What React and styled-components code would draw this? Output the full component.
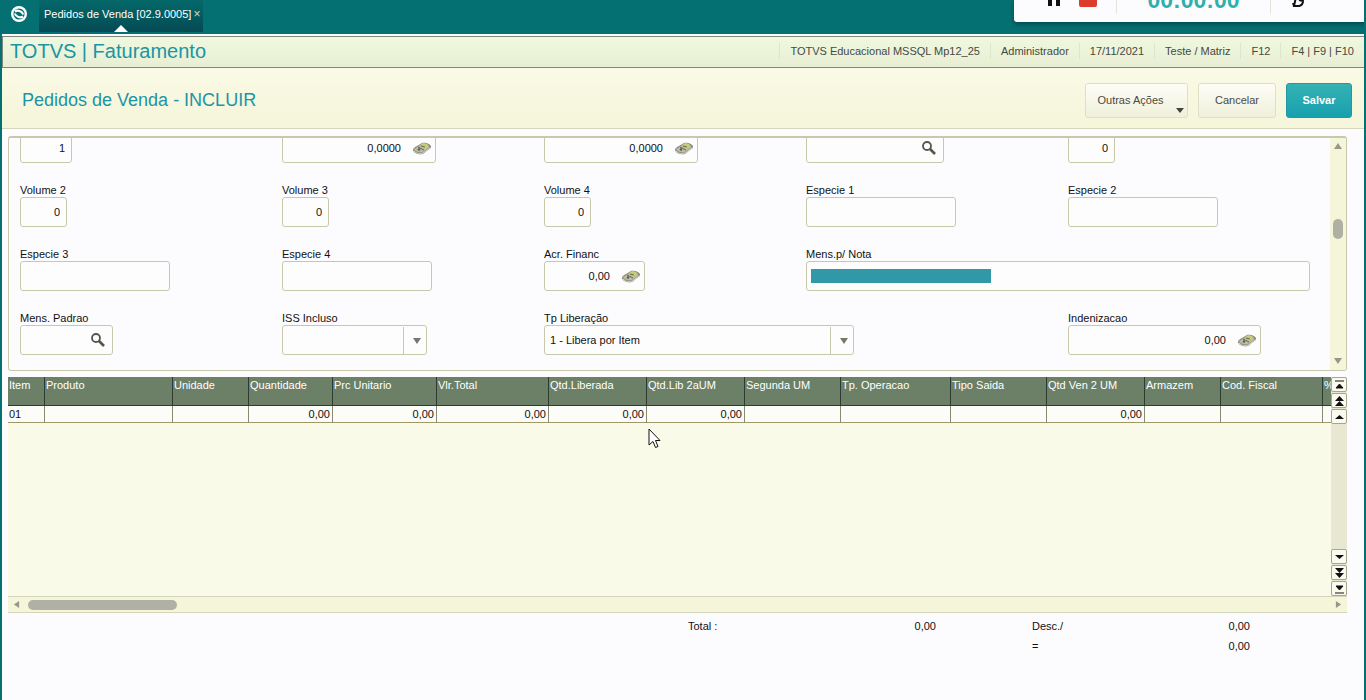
import React from "react";
import styled, { createGlobalStyle } from "styled-components";

const Global = createGlobalStyle`
  * { box-sizing: border-box; }
  body { margin: 0; background: #fcfcfe; font-family: "Liberation Sans", Arial, sans-serif; font-size: 11px; color: #111; }
  button, input, select { font: inherit; color: inherit; }
`;

const Window = styled.div`
  position: relative;
  display: flex;
  flex-direction: column;
  min-height: 100vh;
  overflow: hidden;
  border: 2px solid #057072;
  border-width: 0 2px;
`;

const TopBar = styled.header`
  display: flex;
  height: 34px;
  background: #057072;
`;

const LogoButton = styled.button`
  display: flex;
  align-items: center;
  justify-content: center;
  width: 34px;
  height: 28px;
  padding: 0;
  border: 0;
  background: none;
`;

const Tab = styled.div`
  position: relative;
  display: flex;
  align-items: center;
  gap: 2px;
  height: 32px;
  margin-left: 3px;
  padding: 0 3px 4px 5px;
  background: linear-gradient(#04696a, #044a54);
  color: #fff;
  white-space: nowrap;
`;

const TabClose = styled.button`
  padding: 0;
  border: 0;
  background: none;
  color: #c4dcdc;
  font-size: 12px;
  line-height: 12px;
`;

const TabMarker = styled.span`
  position: absolute;
  left: 75px;
  bottom: 0;
  border: 7px solid transparent;
  border-top-width: 0;
  border-bottom-color: #fff;
`;

const Recorder = styled.aside`
  position: absolute;
  top: 0;
  right: -2px;
  display: flex;
  align-items: flex-end;
  width: 352px;
  height: 22px;
  padding-left: 34px;
  overflow: hidden;
  border-bottom-left-radius: 3px;
  background: #fcfcfe;
  box-shadow: 0 2px 5px rgba(0, 30, 40, 0.5);
`;

const Bars = styled.span`
  width: 12px;
  height: 6px;
  margin-bottom: 16px;
  border: solid #111;
  border-width: 0 4px;
`;

const Stop = styled.span`
  width: 18px;
  height: 7px;
  margin: 0 19px 15px;
  border-radius: 0 0 2px 2px;
  background: #dc3c2c;
`;

const Rule = styled.span`
  width: 1px;
  height: 14px;
  margin-bottom: 8px;
  background: #e4e4dc;
`;

const Timer = styled.span`
  width: 153px;
  margin-bottom: 10px;
  color: #2fb0ac;
  font-size: 23px;
  font-weight: bold;
  line-height: 23px;
  text-align: center;
`;

const TitleBar = styled.div`
  display: flex;
  align-items: center;
  justify-content: space-between;
  height: 32px;
  margin-top: 2px;
  padding: 0 0 2px 7px;
  border: 1px solid #83867c;
  border-right: 0;
  background: linear-gradient(#eff9df, #e8eed4);
`;

const AppName = styled.div`
  color: #1a95a4;
  font-size: 20px;
  line-height: 24px;
`;

const SessionInfo = styled.ul`
  display: flex;
  margin: 0;
  padding: 0;
  list-style: none;
  color: #48483e;
`;

const SessionItem = styled.li`
  padding: 2px 10px;
  border-left: 1px solid #dfe4cc;
`;

const Heading = styled.section`
  display: flex;
  align-items: center;
  gap: 10px;
  height: 61px;
  padding: 4px 12px 0 20px;
  border-bottom: 1px solid #d6d6c0;
  background: linear-gradient(#fafae6, #f5f5da);
`;

const PageTitle = styled.h1`
  flex: 1;
  margin: 0;
  color: #1a95a4;
  font-size: 18px;
  font-weight: normal;
`;

const Button = styled.button`
  position: relative;
  width: ${(p) => p.$width}px;
  height: 35px;
  padding: 0 ${(p) => (p.$menu ? 12 : 0)}px 0 0;
  border: 1px solid ${(p) => (p.$primary ? "#2398a4" : "#dfdfc8")};
  border-radius: 3px;
  background: ${(p) => (p.$primary ? "linear-gradient(#34b2b4, #18a0ae)" : "linear-gradient(#fdfdf6, #f0f0dc)")};
  color: ${(p) => (p.$primary ? "#fff" : "#4a4a42")};
  font-weight: ${(p) => (p.$primary ? "bold" : "normal")};
`;

const Caret = styled.span`
  position: absolute;
  right: 3px;
  bottom: 4px;
  border: 4px solid transparent;
  border-top: 5px solid #44443c;
  border-bottom: 0;
`;

const Body = styled.main`
  padding: 7px 17px 0 6px;
`;

const Panel = styled.section`
  display: flex;
  height: 235px;
  border: 1px solid #c8c8aa;
  border-top: 2px solid #c8c8aa;
  border-radius: 3px;
  overflow: hidden;
`;

const Fields = styled.form`
  flex: 1;
  display: flex;
  flex-direction: column;
  justify-content: flex-end;
  padding: 0 0 15px 11px;
`;

const FieldGrid = styled.div`
  flex: none;
  display: grid;
  grid-template-columns: repeat(5, 1fr);
  row-gap: 21px;
`;

const FieldBox = styled.div`
  grid-column: ${(p) => p.$col} / span ${(p) => p.$span || 1};
  min-width: 0;
`;

const Label = styled.label`
  display: block;
  height: 13px;
  line-height: 13px;
`;

const Control = styled.div`
  position: relative;
  display: flex;
  align-items: center;
  width: ${(p) => (p.$width ? p.$width + "px" : "calc(100% - 20px)")};
  height: 30px;
  border: 1px solid #c8c8aa;
  border-radius: 3px;
  background: #fdfdfe;
`;

const TextInput = styled.input`
  flex: 1;
  width: 0;
  height: 28px;
  padding: 0 ${(p) => (p.$spaced ? 12 : 6)}px 0 6px;
  border: 0;
  outline: 0;
  background: transparent;
  text-align: ${(p) => (p.$numeric ? "right" : "left")};
`;

const Select = styled.select`
  width: 100%;
  height: 28px;
  padding: 0 24px 0 5px;
  border: 0;
  outline: 0;
  appearance: none;
  background: transparent;
`;

const SelectArrow = styled.span`
  position: absolute;
  top: 1px;
  right: 0;
  bottom: 0;
  display: flex;
  align-items: center;
  justify-content: center;
  width: 23px;
  padding-left: 3px;
  border-left: 1px solid #c8c8aa;
  pointer-events: none;
`;

const IconButton = styled.button`
  display: flex;
  width: 18px;
  margin-right: 4px;
  padding: 0;
  border: 0;
  background: none;
`;

const Selection = styled.mark`
  width: 180px;
  height: 14px;
  margin-left: 4px;
  background: #3298a8;
`;

const VScroll = styled.div`
  display: flex;
  flex-direction: column;
  align-items: center;
  justify-content: space-between;
  width: 16px;
  padding: 4px 0 5px;
  background: #f5f5da;
`;

const VThumb = styled.span`
  width: 10px;
  height: 20px;
  margin-bottom: 49px;
  border-radius: 5px;
  background: #b0b0a4;
`;

const GridArea = styled.section`
  display: flex;
  height: 219px;
  margin-top: 6px;
  background: #fafae8;
`;

const TableClip = styled.div`
  flex: 1;
  min-width: 0;
  overflow: hidden;
`;

const Table = styled.table`
  width: 100%;
  table-layout: fixed;
  border-collapse: separate;
  border-spacing: 0;
`;

const Th = styled.th`
  height: 29px;
  padding: 2px 0 0 1px;
  border-right: 1px solid #2e3c30;
  border-bottom: 1px solid #2e3c30;
  background: #6c8068;
  color: #fff;
  font-weight: normal;
  line-height: 13px;
  text-align: left;
  vertical-align: top;
  white-space: nowrap;
  overflow: hidden;

  &:last-child { border-right: 0; }
`;

const Td = styled.td`
  height: 17px;
  padding: 0 2px 0 1px;
  border-right: 1px solid #8a8a70;
  border-bottom: 1px solid #a09868;
  background: #fcfcf8;
  line-height: 16px;
  text-align: ${(p) => (p.$numeric ? "right" : "left")};

  &:last-child { border-right: 0; }
`;

const StepColumn = styled.div`
  display: flex;
  flex-direction: column;
  gap: 1px;
  width: 16px;
  background: #e8e8d2;
`;

const StepButton = styled.button`
  display: flex;
  align-items: center;
  justify-content: center;
  width: 16px;
  height: 15px;
  margin-top: ${(p) => (p.$last ? "auto" : 0)};
  padding: 0;
  border: 1px solid #a6a690;
  border-radius: 2px;
  background: #fafaee;
`;

const HScroll = styled.div`
  display: flex;
  align-items: center;
  height: 17px;
  padding: 0 5px;
  border: solid #d4d4bc;
  border-width: 1px 0;
  background: #f5f5da;
`;

const HThumb = styled.span`
  width: 149px;
  height: 10px;
  margin: 0 auto 0 8px;
  border-radius: 5px;
  background: #b0b0a4;
`;

const Totals = styled.div`
  display: flex;
  align-items: flex-start;
  gap: 96px;
  padding: 3px 97px 0 0;
`;

const TotalGroup = styled.dl`
  width: ${(p) => p.$width}px;
  margin: 0;
  margin-left: ${(p) => (p.$first ? "auto" : 0)};
`;

const TotalLine = styled.div`
  display: flex;
  justify-content: space-between;
  line-height: 20px;

  dd { margin: 0; }
`;

const Pointer = styled.svg`
  position: absolute;
  left: 646px;
  top: 428px;
`;

const Arrow = ({ dir = "down", size = 8, color = "#77776c" }) => {
  const d = { down: "M0 1h8L4 7z", up: "M0 7h8L4 1z", left: "M7 0v8L1 4z", right: "M1 0v8l6-4z" }[dir];
  return <svg width={size} height={size} viewBox="0 0 8 8" aria-hidden="true"><path d={d} fill={color} /></svg>;
};

const Search = () => (
  <svg width="16" height="16" viewBox="0 0 16 16" fill="none" stroke="#55554a" aria-hidden="true">
    <circle cx="6" cy="6" r="4" strokeWidth="1.8" />
    <path d="M9 9l5 5" strokeWidth="2.6" />
  </svg>
);

const Money = () => (
  <svg width="18" height="15" viewBox="0 0 18 15" aria-hidden="true">
    <path d="M0 9c0-2 2-3 4-4l5-3c3-1 8 1 9 3 0 2-1 3-3 4l-5 4c-3 1-9 0-10-4z" fill="#85857a" />
    <path d="M1 8l8-5 8 3-7 5c-3 1-8 0-9-3z" fill="#bcbca4" />
    <path d="M7 4l3-2c2 0 5 1 6 3l-4 3z" fill="#c6cc7c" />
    <path d="M1 10c3 3 6 3 9 2l7-5" fill="none" stroke="#d6d6c8" />
    <path d="M5 6l6 3M8 5l4 1" stroke="#66664c" />
    <circle cx="6" cy="8.500" r="1.200" fill="#5c5c48" />
  </svg>
);

const stepPaths = {
  first: "M1 2h9M2 9h7L5.5 5z",
  pageUp: "M1 6h9L5.5 1zM1 11h9L5.5 6z",
  up: "M1 8h9L5.5 4z",
  down: "M1 4h9L5.5 8z",
  pageDown: "M1 1h9L5.5 6zM1 6h9L5.5 11z",
  last: "M2 3h7L5.5 7zM1 10h9",
};

const Step = ({ kind, last }) => (
  <StepButton type="button" aria-label={kind} $last={last}>
    <svg width="11" height="12" viewBox="0 0 11 12" aria-hidden="true">
      <path d={stepPaths[kind]} fill="#111" stroke={kind === "first" || kind === "last" ? "#111" : "none"} />
    </svg>
  </StepButton>
);

const fields = [
  { id: "moeda", hint: "Moeda", col: 1, width: 52, value: "1", numeric: true },
  { id: "pesoLiq", hint: "Peso Liquido", col: 2, width: 154, value: "0,0000", icon: "money" },
  { id: "pesoBru", hint: "Peso Bruto", col: 3, width: 154, value: "0,0000", icon: "money" },
  { id: "redesp", hint: "Redespacho", col: 4, width: 138, value: "", icon: "search" },
  { id: "volume1", hint: "Volume 1", col: 5, width: 47, value: "0", numeric: true },
  { id: "volume2", label: "Volume 2", col: 1, width: 47, value: "0", numeric: true },
  { id: "volume3", label: "Volume 3", col: 2, width: 47, value: "0", numeric: true },
  { id: "volume4", label: "Volume 4", col: 3, width: 47, value: "0", numeric: true },
  { id: "especie1", label: "Especie 1", col: 4, width: 150, value: "" },
  { id: "especie2", label: "Especie 2", col: 5, width: 150, value: "" },
  { id: "especie3", label: "Especie 3", col: 1, width: 150, value: "" },
  { id: "especie4", label: "Especie 4", col: 2, width: 150, value: "" },
  { id: "acrFinanc", label: "Acr. Financ", col: 3, width: 101, value: "0,00", icon: "money" },
  { id: "mensNota", label: "Mens.p/ Nota", col: 4, span: 2, value: "", selected: true },
  { id: "mensPadrao", label: "Mens. Padrao", col: 1, width: 93, value: "", icon: "search" },
  { id: "iss", label: "ISS Incluso", col: 2, width: 145, options: [""] },
  { id: "tpLib", label: "Tp Liberação", col: 3, span: 2, width: 310, options: ["1 - Libera por Item"] },
  { id: "indeniz", label: "Indenizacao", col: 5, width: 193, value: "0,00", icon: "money" },
];

const Field = ({ id, label, hint, col, span, width, value, options, icon, numeric, selected }) => (
  <FieldBox $col={col} $span={span}>
    <Label htmlFor={id}>{label}</Label>
    <Control $width={width}>
      {selected && <Selection />}
      {options ? (
        <>
          <Select id={id}>{options.map((o) => <option key={o}>{o}</option>)}</Select>
          <SelectArrow><Arrow /></SelectArrow>
        </>
      ) : (
        <TextInput
          id={id}
          aria-label={hint}
          defaultValue={value}
          $numeric={numeric || icon === "money"}
          $spaced={icon === "money"}
        />
      )}
      {icon === "money" && <IconButton type="button" aria-label="Calculadora"><Money /></IconButton>}
      {icon === "search" && <IconButton type="button" aria-label="Pesquisar"><Search /></IconButton>}
    </Control>
  </FieldBox>
);

const columns = [
  ["Item", 37, "01"], ["Produto", 128, ""], ["Unidade", 76, ""], ["Quantidade", 84, "0,00"],
  ["Prc Unitario", 104, "0,00"], ["Vlr.Total", 112, "0,00"], ["Qtd.Liberada", 98, "0,00"],
  ["Qtd.Lib 2aUM", 98, "0,00"], ["Segunda UM", 96, ""], ["Tp. Operacao", 110, ""],
  ["Tipo Saida", 96, ""], ["Qtd Ven 2 UM", 98, "0,00"], ["Armazem", 76, ""],
  ["Cod. Fiscal", 102, ""], ["%", null, ""],
];

const session = [
  "TOTVS Educacional MSSQL Mp12_25", "Administrador", "17/11/2021", "Teste / Matriz", "F12", "F4 | F9 | F10",
];

export default function App() {
  return (
    <Window>
      <Global />
      <TopBar>
        <LogoButton type="button" aria-label="TOTVS">
          <svg width="18" height="18" viewBox="0 0 18 18" fill="none" stroke="#fff">
            <circle cx="9" cy="9" r="6.8" strokeWidth="2.4" />
            <path d="M5 6.500C7.500 4.800 12 6 13.200 9.500M4.800 8.500C6 12 10.500 13.200 13 11.500" strokeWidth="2.2" />
          </svg>
        </LogoButton>
        <Tab>
          Pedidos de Venda [02.9.0005]
          <TabClose type="button" aria-label="Fechar">×</TabClose>
          <TabMarker />
        </Tab>
      </TopBar>
      <Recorder>
        <Bars />
        <Stop />
        <Rule />
        <Timer>00:00:00</Timer>
        <Rule />
        <svg width="36" height="22" viewBox="0 0 36 22" fill="none" stroke="#111" strokeWidth="2" aria-hidden="true">
          <path d="M25-3l-2 9h5q4-1 4-5l-4-1M23 6l-1-3" />
        </svg>
      </Recorder>
      <TitleBar>
        <AppName>TOTVS | Faturamento</AppName>
        <SessionInfo>{session.map((item) => <SessionItem key={item}>{item}</SessionItem>)}</SessionInfo>
      </TitleBar>
      <Heading>
        <PageTitle>Pedidos de Venda - INCLUIR</PageTitle>
        <Button type="button" $width={103} $menu>Outras Ações<Caret /></Button>
        <Button type="button" $width={78}>Cancelar</Button>
        <Button type="button" $width={66} $primary>Salvar</Button>
      </Heading>
      <Body>
        <Panel>
          <Fields>
            <FieldGrid>{fields.map((f) => <Field key={f.id} {...f} />)}</FieldGrid>
          </Fields>
          <VScroll><Arrow dir="up" color="#96968a" /><VThumb /><Arrow color="#96968a" /></VScroll>
        </Panel>
        <GridArea>
          <TableClip>
            <Table>
              <colgroup>
                {columns.map(([name, width]) => <col key={name} width={width || undefined} />)}
              </colgroup>
              <thead><tr>{columns.map(([name]) => <Th key={name}>{name}</Th>)}</tr></thead>
              <tbody>
                <tr>{columns.map(([name, , value]) => <Td key={name} $numeric={value === "0,00"}>{value}</Td>)}</tr>
              </tbody>
            </Table>
          </TableClip>
          <StepColumn>
            <Step kind="first" /><Step kind="pageUp" /><Step kind="up" />
            <Step kind="down" last /><Step kind="pageDown" /><Step kind="last" />
          </StepColumn>
        </GridArea>
        <HScroll>
          <Arrow dir="left" size={7} color="#96968a" />
          <HThumb />
          <Arrow dir="right" size={7} color="#96968a" />
        </HScroll>
        <Totals>
          <TotalGroup $width={248} $first>
            <TotalLine><dt>Total :</dt><dd>0,00</dd></TotalLine>
          </TotalGroup>
          <TotalGroup $width={218}>
            <TotalLine><dt>Desc./</dt><dd>0,00</dd></TotalLine>
            <TotalLine><dt>=</dt><dd>0,00</dd></TotalLine>
          </TotalGroup>
        </Totals>
      </Body>
      <Pointer width="14" height="21" viewBox="0 0 14 21" aria-hidden="true">
        <path d="M1 1v16l4-3.500 2.500 6 2.500-1-2.500-6H12z" fill="#fff" stroke="#111" />
      </Pointer>
    </Window>
  );
}
